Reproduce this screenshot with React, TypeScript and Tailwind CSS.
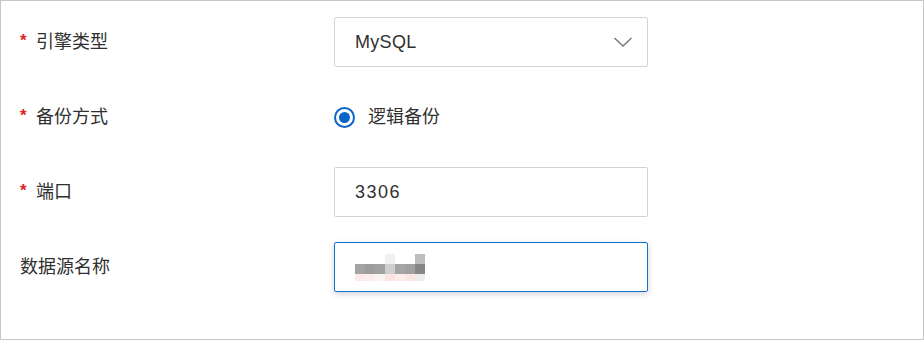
import React from "react";

const font = { fontFamily: '"Liberation Sans", "Noto Sans CJK SC", sans-serif' };

function Label({ text, required }: { text: string; required?: boolean }) {
  return (
    <div className="w-[314px] shrink-0 flex items-center text-[18px] text-[#303030]">
      {required ? (
        <span className="w-[16px] text-[#e01f1f] text-[17px] font-bold leading-none -mt-[3px]">*</span>
      ) : null}
      <span>{text}</span>
    </div>
  );
}

function Mosaic() {
  const top = [null, null, null, "#f0f0f0", null, null, "#bdbdbd"];
  const mid = ["#a3a3a3", "#9c9c9c", "#a0a0a0", "#cfcfcf", "#a5a5a5", "#a0a0a0", "#858585"];
  const bot = ["#fdeaea", "#fdeeee", "#fbf3f3", "#fbe3e3", "#fdeeee", "#fbe6e6", "#ececec"];
  return (
    <svg width="70" height="27" viewBox="0 0 70 27">
      {top.map((c, i) => (c ? <rect key={"t" + i} x={i * 10} y={0} width={10} height={10} fill={c} /> : null))}
      {mid.map((c, i) => (
        <rect key={"m" + i} x={i * 10} y={10} width={10} height={10} fill={c} />
      ))}
      {bot.map((c, i) => (
        <rect key={"b" + i} x={i * 10} y={20} width={10} height={7} fill={c} />
      ))}
    </svg>
  );
}

export default function App() {
  return (
    <div style={font} className="w-[924px] h-[341px] bg-white">
      <div className="w-[924px] h-[340px] border border-[#c6c6c6] pl-[19px] pt-[16px] flex flex-col gap-[25px]">
        <div className="flex h-[50px]">
          <Label text="引擎类型" required />
          <div className="w-[314px] h-[50px] border border-[#d3d3d3] rounded-[2px] flex items-center justify-between pl-[20px] pr-[14px] text-[18px] text-[#303030]">
            <span className="tracking-[0.3px]">MySQL</span>
            <svg width="20" height="12" viewBox="0 0 20 12" fill="none">
              <path d="M1.5 2 L10 10 L18.5 2" stroke="#777777" strokeWidth="1.4" />
            </svg>
          </div>
        </div>
        <div className="flex h-[50px]">
          <Label text="备份方式" required />
          <div className="flex items-center">
            <span className="w-[21px] h-[21px] rounded-full border-[2px] border-[#0b64c8] flex items-center justify-center">
              <span className="w-[11px] h-[11px] rounded-full bg-[#0b64c8]" />
            </span>
            <span className="ml-[13px] text-[18px] text-[#303030]">逻辑备份</span>
          </div>
        </div>
        <div className="flex h-[50px]">
          <Label text="端口" required />
          <div className="w-[314px] h-[50px] border border-[#d3d3d3] rounded-[2px] flex items-center pl-[20px] text-[18px] text-[#303030]">
            <span className="tracking-[1.5px]">3306</span>
          </div>
        </div>
        <div className="flex h-[50px]">
          <Label text="数据源名称" />
          <div className="w-[314px] h-[50px] border border-[#1470d0] rounded-[2px] flex items-center pl-[20px] shadow-[0_2px_6px_rgba(0,0,0,0.18)]">
            <Mosaic />
          </div>
        </div>
      </div>
    </div>
  );
}
